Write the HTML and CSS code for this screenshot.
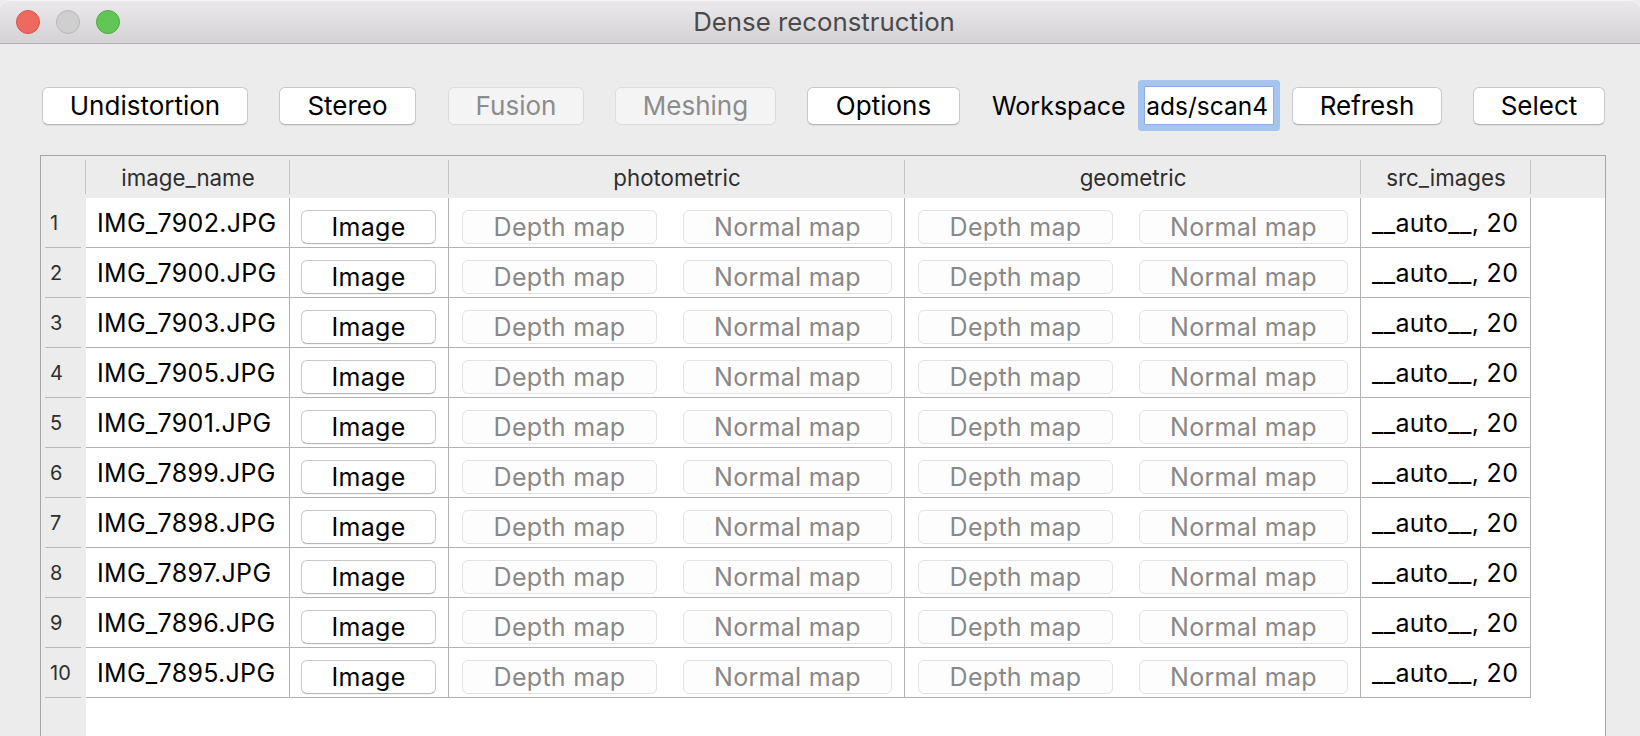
FILE: index.html
```html
<!DOCTYPE html>
<html lang="en">
<head>
<meta charset="utf-8">
<title>Dense reconstruction</title>
<link rel="stylesheet" href="styles.css">
</head>
<body>
<div class="window">
  <header class="titlebar">
    <div class="lights">
      <span class="light light-close"></span>
      <span class="light light-min"></span>
      <span class="light light-zoom"></span>
    </div>
    <div class="title">Dense reconstruction</div>
    <div></div>
  </header>

  <div class="toolbar">
    <button class="btn btn-undist">Undistortion</button>
    <button class="btn btn-stereo">Stereo</button>
    <button class="btn btn-fusion" disabled>Fusion</button>
    <button class="btn btn-meshing" disabled>Meshing</button>
    <button class="btn btn-options">Options</button>
    <div class="workspace">
      <span class="ws-label">Workspace</span>
      <div class="field"><span class="field-text">ads/scan4</span></div>
      <button class="btn btn-refresh">Refresh</button>
    </div>
    <button class="btn btn-select">Select</button>
  </div>

  <div class="table">
    <div class="row head-row">
      <div class="hcell"></div>
      <div class="hcell">image_name</div>
      <div class="hcell"></div>
      <div class="hcell">photometric</div>
      <div class="hcell">geometric</div>
      <div class="hcell">src_images</div>
      <div class="hcell hcell-last"></div>
    </div>
    <div id="rows"></div>
  </div>
</div>
<script src="app.js"></script>
</body>
</html>
```

FILE: app.js
```js
const names = ["IMG_7902.JPG","IMG_7900.JPG","IMG_7903.JPG","IMG_7905.JPG","IMG_7901.JPG","IMG_7899.JPG","IMG_7898.JPG","IMG_7897.JPG","IMG_7896.JPG","IMG_7895.JPG"];
const rows = document.getElementById("rows");
names.forEach((n, i) => {
  const r = document.createElement("div");
  r.className = "row data-row";
  r.innerHTML =
    '<div class="vh">' + (i + 1) + '</div>' +
    '<div class="cell cell-text">' + n + '</div>' +
    '<div class="cell cell-img"><button class="cbtn">Image</button></div>' +
    '<div class="cell cell-maps"><button class="cbtn" disabled>Depth map</button><button class="cbtn" disabled>Normal map</button></div>' +
    '<div class="cell cell-maps"><button class="cbtn" disabled>Depth map</button><button class="cbtn" disabled>Normal map</button></div>' +
    '<div class="cell cell-text">__auto__, 20</div>' +
    '<div class="filler"></div>';
  rows.appendChild(r);
});
```

FILE: styles.css
```css
html, body {
  margin: 0;
  padding: 0;
}
body {
  width: 1640px;
  height: 736px;
  overflow: hidden;
  background: #ececec;
  font-family: "Inter", "Liberation Sans", sans-serif;
  color: #000;
}
.window {
  height: 736px;
  display: flex;
  flex-direction: column;
}

/* title bar */
.titlebar {
  height: 44px;
  box-sizing: border-box;
  display: grid;
  grid-template-columns: 1fr auto 1fr;
  align-items: center;
  background: linear-gradient(#ebe9eb, #d4d2d4);
  border-bottom: 1px solid #b2b0b2;
  border-top-left-radius: 9px;
  border-top-right-radius: 9px;
  box-shadow: inset 0 1px 0 #f6f5f6;
}
.lights {
  display: flex;
  gap: 16px;
  padding-left: 16px;
}
.light {
  width: 24px;
  height: 24px;
  border-radius: 50%;
  box-sizing: border-box;
}
.light-close { background: #ee6a5f; border: 1px solid #d6564b; }
.light-min { background: #d0cfd0; border: 1px solid #b9b8b9; }
.light-zoom { background: #62c655; border: 1px solid #4faa41; }
.title {
  font-size: 25.8px;
  color: #4b4a4b;
  padding-left: 8px;
}

/* toolbar */
.toolbar {
  display: flex;
  align-items: center;
  gap: 31px;
  padding: 42px 0 0 42px;
}
.btn {
  height: 38px;
  box-sizing: border-box;
  font-family: inherit;
  font-size: 26px;
  color: #000;
  background: #fff;
  border: 1px solid #c9c9c9;
  border-bottom-color: #b4b4b4;
  border-radius: 6px;
  box-shadow: 0 1px 1px rgba(0, 0, 0, 0.06);
  padding: 0;
  line-height: 1;
}
.btn:disabled {
  background: #f4f4f4;
  border-color: #dcdcdc;
  color: #8c8c8c;
  box-shadow: none;
}
.btn-undist { width: 206px; }
.btn-stereo { width: 137px; margin-right: 1px; }
.btn-fusion { width: 136px; }
.btn-meshing { width: 161px; }
.btn-options { width: 153px; margin-right: 1px; }
.btn-refresh { width: 150px; }
.btn-select { width: 132px; }

.workspace {
  display: flex;
  align-items: center;
}
.ws-label {
  width: 132px;
  font-size: 25px;
  margin-right: 20px;
}
.field {
  width: 130px;
  height: 39px;
  box-sizing: border-box;
  background: #fff;
  border: 1px solid #88ade4;
  border-radius: 1px;
  box-shadow: 0 0 0 6px #a5c4ef;
  display: flex;
  justify-content: flex-end;
  align-items: center;
  overflow: hidden;
  padding-right: 5px;
  margin-right: 18px;
}
.field-text {
  font-size: 24.5px;
  white-space: nowrap;
}

/* table */
.table {
  margin: 30px 0 0 40px;
  width: 1566px;
  flex: 1;
  box-sizing: border-box;
  border: 1px solid #a6a6a6;
  border-bottom: 0;
  background: linear-gradient(to right, #ececec 45px, #fff 45px);
}
.row {
  display: grid;
  grid-template-columns: 45px 204px 159px 456px 456px 170px 1fr;
}
.head-row {
  height: 42px;
  background: #ececec;
}
.hcell {
  display: flex;
  align-items: center;
  justify-content: center;
  font-size: 22.3px;
  color: #2e2e2e;
  background: linear-gradient(#c3c3c3, #c3c3c3) no-repeat right 0 top 4px / 1px 34px;
}
.hcell-last { background: none; }

.data-row { height: 50px; }
.vh {
  display: flex;
  align-items: center;
  padding-left: 9px;
  font-size: 20px;
  color: #2e2e2e;
  background: linear-gradient(#b9b9b9, #b9b9b9) no-repeat left 4px bottom 0 / 36px 1px;
}
.cell {
  box-sizing: border-box;
  background: #fff;
  border-right: 1px solid #b3b3b3;
  border-bottom: 1px solid #b3b3b3;
}
.cell-text {
  display: flex;
  align-items: center;
  padding-left: 11px;
  font-size: 25px;
  letter-spacing: 0.3px;
  white-space: nowrap;
}
.cell-img {
  padding: 12px 12px 0 11px;
}
.cell-maps {
  display: grid;
  grid-template-columns: 195px 209px;
  justify-content: space-between;
  padding: 12px 12px 0 13px;
}
.cbtn {
  height: 34px;
  width: 100%;
  box-sizing: border-box;
  font-family: inherit;
  font-size: 25px;
  letter-spacing: 0.3px;
  color: #000;
  background: #fff;
  border: 1px solid #c8c8c8;
  border-bottom-color: #b6b6b6;
  border-radius: 6px;
  box-shadow: 0 1px 1px rgba(0, 0, 0, 0.05);
  padding: 0;
  line-height: 1;
}
.cbtn:disabled {
  background: #fdfdfd;
  border-color: #e3e3e3;
  color: #888;
  box-shadow: none;
}
```
